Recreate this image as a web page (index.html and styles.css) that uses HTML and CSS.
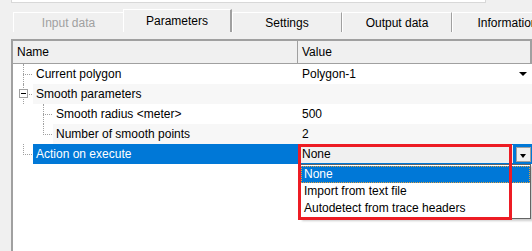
FILE: index.html
```html
<!DOCTYPE html>
<html lang="en">
<head>
    <meta charset="UTF-8">
    <title>Parameters</title>
    <link rel="stylesheet" href="styles.css">
</head>
<body>
    <div class="top-box"></div>

    <!-- Tab strip -->
    <div class="tabs">
        <div class="tab disabled">Input data</div>
        <div class="tab active">Parameters</div>
        <div class="tab">Settings</div>
        <div class="tab">Output data</div>
        <div class="tab last">Information</div>
    </div>

    <!-- Property grid -->
    <div class="grid">
        <div class="grid-header">
            <div class="col-name">Name</div>
            <div class="col-value">Value</div>
        </div>

        <div class="row">
            <div class="name lvl1 mid"><span class="label">Current polygon</span></div>
            <div class="value">Polygon-1<span class="arrow"></span></div>
        </div>
        <div class="row">
            <div class="name lvl1 mid"><span class="toggle"></span><span class="label alt">Smooth parameters</span></div>
            <div class="value alt"></div>
        </div>
        <div class="row">
            <div class="name lvl2 mid"><span class="label">Smooth radius &lt;meter&gt;</span></div>
            <div class="value">500</div>
        </div>
        <div class="row">
            <div class="name lvl2 end"><span class="label alt">Number of smooth points</span></div>
            <div class="value alt">2</div>
        </div>
        <div class="row">
            <div class="name lvl1 end"><span class="label selected">Action on execute</span></div>
            <div class="value selected">
                <div class="combo">
                    <div class="combo-field">None</div>
                    <div class="combo-btn"><span class="arrow small"></span></div>
                </div>
            </div>
        </div>

        <!-- Open dropdown list -->
        <div class="dropdown">
            <div class="option current">None</div>
            <div class="option">Import from text file</div>
            <div class="option">Autodetect from trace headers</div>
        </div>

        <!-- Annotation box -->
        <div class="highlight-box"></div>
    </div>
</body>
</html>
```

FILE: styles.css
```css
body {
    margin: 0;
    padding: 0;
    width: 532px;
    height: 251px;
    overflow: hidden;
    background: #f0f0f0;
    font-family: "Liberation Sans", Arial, sans-serif;
    font-size: 12px;
    color: #000;
}

/* Edge of the panel above */
.top-box {
    margin-left: 11px;
    width: 473px;
    height: 2px;
    background: #fff;
    border: 1px solid #d8d8d8;
    border-top: none;
}

/* Tab strip */
.tabs {
    display: flex;
    align-items: flex-end;
    margin: 6px 0 0 13px;
    height: 23px;
}

.tab {
    flex: none;
    width: 110px;
    height: 20px;
    line-height: 21px;
    text-align: center;
    border-top: 1px solid #fff;
    border-left: 1px solid #fff;
    border-right: 1px solid #a0a0a0;
    box-sizing: border-box;
    white-space: nowrap;
}

.tab.disabled {
    color: #a0a0a0;
    border-right: none;
}

.tab.active {
    width: 109px;
    height: 23px;
    line-height: 22px;
    border-right: 2px solid #a0a0a0;
}

.tab.last {
    width: 110px;
    border-right: none;
}

/* Property grid */
.grid {
    position: relative;
    margin: 7px 0 0 11px;
    height: 220px;
    background: #fff;
    border-top: 2px solid #a0a0a0;
    border-left: 2px solid #a0a0a0;
    box-sizing: border-box;
}

.grid-header {
    display: flex;
    height: 23px;
    line-height: 22px;
    background: #f0f0f0;
    border-bottom: 1px solid #a0a0a0;
    box-sizing: border-box;
}

.col-name {
    width: 285px;
    padding-left: 4px;
    border-right: 1px solid #a0a0a0;
    box-sizing: border-box;
}

.col-value {
    flex: 1;
    padding-left: 4px;
    border-right: 2px solid #a0a0a0;
}

.row {
    display: flex;
    height: 20px;
    line-height: 20px;
}

.name {
    position: relative;
    width: 285px;
    display: flex;
    box-sizing: border-box;
}

.name.lvl1 { padding-left: 20px; }
.name.lvl2 { padding-left: 40px; }

/* dotted tree lines */
.name::before {
    content: "";
    position: absolute;
    top: 10px;
    width: 9px;
    border-top: 1px dotted #a0a0a0;
}

.name::after {
    content: "";
    position: absolute;
    top: 0;
    height: 20px;
    border-left: 1px dotted #a0a0a0;
}

.name.lvl1::before { left: 10px; }
.name.lvl1::after { left: 10px; }
.name.lvl2::before { left: 30px; }
.name.lvl2::after { left: 30px; }
.name.end::after { height: 11px; }

.label {
    flex: 1;
    padding-left: 3px;
}

.label.alt,
.value.alt {
    background: #f7f7f7;
}

.label.selected {
    background: #0078d7;
    color: #fff;
}

/* [-] expander box */
.toggle {
    position: absolute;
    left: 6px;
    top: 5px;
    width: 7px;
    height: 7px;
    border: 1px solid #a0a0a0;
    background: #fff;
    z-index: 1;
}

.toggle::after {
    content: "";
    position: absolute;
    left: 1px;
    top: 3px;
    width: 5px;
    height: 1px;
    background: #000;
}

.value {
    flex: 1;
    position: relative;
    padding-left: 4px;
}

.value.selected {
    background: #0078d7;
    padding-left: 2px;
}

/* small down triangle */
.arrow {
    position: absolute;
    right: 5px;
    top: 8px;
    width: 0;
    height: 0;
    border-left: 4px solid transparent;
    border-right: 4px solid transparent;
    border-top: 4px solid #000;
}

.arrow.small {
    right: auto;
    left: 3px;
    top: 6px;
    border-left-width: 3.5px;
    border-right-width: 3.5px;
}

/* Combo box in the selected row */
.combo {
    display: flex;
    height: 18px;
    margin-top: 1px;
}

.combo-field {
    flex: 1;
    background: #f0f0f0;
    line-height: 18px;
    padding-left: 2px;
}

.combo-btn {
    position: relative;
    width: 15px;
    height: 15px;
    margin: 2px 1px 0 3px;
    background: #f0f0f0;
    border: 1px solid #a0a0a0;
    box-sizing: border-box;
}

/* Open list */
.dropdown {
    position: absolute;
    left: 287px;
    top: 123px;
    width: 229px;
    padding: 1px 0;
    background: #fff;
    border: 1px solid #646464;
    box-shadow: 2px 2px 2px rgba(0, 0, 0, 0.2);
}

.option {
    height: 17px;
    line-height: 17px;
    padding-left: 3px;
}

.option.current {
    background: #0078d7;
    color: #fff;
    outline: 1px dotted #e0a040;
    outline-offset: -1px;
}

.highlight-box {
    position: absolute;
    left: 285px;
    top: 103px;
    width: 214px;
    height: 76px;
    border: 3px solid #ed1c24;
    box-sizing: border-box;
}
```
